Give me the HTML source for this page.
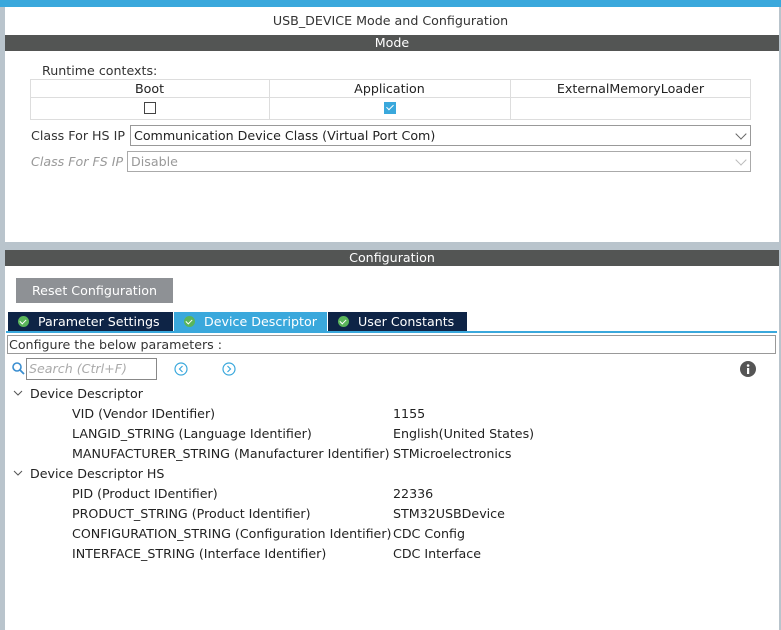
<!DOCTYPE html>
<html><head><meta charset="utf-8"><style>
*{margin:0;padding:0;box-sizing:border-box}
body{width:781px;height:630px;overflow:hidden;background:#fff;font-family:"DejaVu Sans","Liberation Sans",sans-serif;font-size:12.65px;color:#222;position:relative}
.a{position:absolute;white-space:nowrap}
.bar{position:absolute;left:5px;width:774px;height:16px;background:#535554;color:#fff;text-align:center;line-height:16px}
.tab{position:absolute;top:312px;height:19px;background:#0e2446;color:#fff;line-height:19px;padding-left:30px}
.tab i{position:absolute;left:10px;top:4px;width:11px;height:11px;border-radius:50%;background:#5ab55a}
.tab i:after{content:"";position:absolute;left:3px;top:2px;width:3px;height:5px;border:solid #fff;border-width:0 1.5px 1.5px 0;transform:rotate(45deg)}
.sel{position:absolute;height:21px;border:1px solid #999;background:#fff;line-height:19px;padding-left:3px}
.chev{position:absolute;right:5px;top:4px;width:8px;height:8px;border:solid #666;border-width:0 1px 1px 0;transform:rotate(45deg)}
</style></head><body>
<div class="a" style="left:0;top:0;width:781px;height:7px;background:#3aa8dc"></div>
<div class="a" style="left:0;top:7px;width:5px;height:623px;background:#b9c4cc"></div>
<div class="a" style="left:779px;top:7px;width:2px;height:623px;background:#b9c4cc"></div>
<div class="a" style="left:5px;top:242px;width:774px;height:8px;background:#b9c4cc"></div>
<div class="a" style="left:0;top:13px;width:781px;text-align:center;color:#333">USB_DEVICE Mode and Configuration</div>
<div class="bar" style="top:35px">Mode</div>
<div class="a" style="left:42px;top:63px;color:#333">Runtime contexts:</div>
<div class="a" style="left:30px;top:79px;width:721px;height:41px;border:1px solid #ddd"></div>
<div class="a" style="left:30px;top:97px;width:721px;height:1px;background:#ddd"></div>
<div class="a" style="left:269px;top:79px;width:1px;height:41px;background:#ddd"></div>
<div class="a" style="left:510px;top:79px;width:1px;height:41px;background:#ddd"></div>
<div class="a" style="left:30px;top:81px;width:239px;text-align:center">Boot</div>
<div class="a" style="left:269px;top:81px;width:241px;text-align:center">Application</div>
<div class="a" style="left:510px;top:81px;width:241px;text-align:center">ExternalMemoryLoader</div>
<div class="a" style="left:144px;top:102px;width:12px;height:12px;border:1px solid #444"></div>
<div class="a" style="left:384px;top:102px;width:12px;height:12px;background:#3aa8dc"><div style="position:absolute;left:4px;top:1px;width:4px;height:7px;border:solid #fff;border-width:0 1.5px 1.5px 0;transform:rotate(45deg)"></div></div>
<div class="a" style="left:31px;top:128px;color:#333">Class For HS IP</div>
<div class="sel" style="left:130px;top:125px;width:621px">Communication Device Class (Virtual Port Com)<span class="chev"></span></div>
<div class="a" style="left:31px;top:154px;color:#999;font-style:italic">Class For FS IP</div>
<div class="sel" style="left:127px;top:151px;width:624px;color:#999;border-color:#aaa">Disable<span class="chev" style="border-color:#bbb"></span></div>
<div class="bar" style="top:250px">Configuration</div>
<div class="a" style="left:16px;top:278px;width:157px;height:25px;background:#8e9195;color:#fff;text-align:center;line-height:25px">Reset Configuration</div>
<div class="tab" style="left:8px;width:165px"><i></i>Parameter Settings</div>
<div class="tab" style="left:174px;width:153px;background:#3aa8dc"><i></i>Device Descriptor</div>
<div class="tab" style="left:328px;width:139px"><i></i>User Constants</div>
<div class="a" style="left:6px;top:331px;width:771px;height:2px;background:#3aa8dc"></div>
<div class="a" style="left:7px;top:335px;width:769px;height:19px;border:1px solid #999;line-height:17px;padding-left:1px;color:#333">Configure the below parameters :</div>
<svg class="a" style="left:12px;top:362px" width="13" height="13"><circle cx="5" cy="5" r="4" fill="none" stroke="#3a8ed0" stroke-width="1.6"/><line x1="8" y1="8" x2="12" y2="12" stroke="#3a8ed0" stroke-width="1.8"/></svg>
<div class="a" style="left:26px;top:358px;width:131px;height:22px;border:1px solid #888;color:#aaa;font-style:italic;line-height:20px;padding-left:2px">Search (Ctrl+F)</div>
<svg class="a" style="left:174px;top:362px" width="14" height="14"><circle cx="7" cy="7" r="6" fill="none" stroke="#3aa8dc" stroke-width="1.2"/><path d="M8.5 4 L5.5 7 L8.5 10" fill="none" stroke="#3aa8dc" stroke-width="1.2"/></svg>
<svg class="a" style="left:222px;top:362px" width="14" height="14"><circle cx="7" cy="7" r="6" fill="none" stroke="#3aa8dc" stroke-width="1.2"/><path d="M5.5 4 L8.5 7 L5.5 10" fill="none" stroke="#3aa8dc" stroke-width="1.2"/></svg>
<svg class="a" style="left:740px;top:361px" width="16" height="16"><circle cx="8" cy="8" r="8" fill="#555"/><rect x="7" y="7" width="2.2" height="6" fill="#fff"/><circle cx="8.1" cy="4.5" r="1.3" fill="#fff"/></svg>
<svg class="a" style="left:13px;top:389px" width="10" height="8"><path d="M1 2 L5 6 L9 2" fill="none" stroke="#555"/></svg>
<div class="a" style="left:30px;top:386px">Device Descriptor</div>
<div class="a" style="left:72px;top:406px">VID (Vendor IDentifier)</div><div class="a" style="left:393px;top:406px">1155</div>
<div class="a" style="left:72px;top:426px">LANGID_STRING (Language Identifier)</div><div class="a" style="left:393px;top:426px">English(United States)</div>
<div class="a" style="left:72px;top:446px">MANUFACTURER_STRING (Manufacturer Identifier)</div><div class="a" style="left:393px;top:446px">STMicroelectronics</div>
<svg class="a" style="left:13px;top:469px" width="10" height="8"><path d="M1 2 L5 6 L9 2" fill="none" stroke="#555"/></svg>
<div class="a" style="left:30px;top:466px">Device Descriptor HS</div>
<div class="a" style="left:72px;top:486px">PID (Product IDentifier)</div><div class="a" style="left:393px;top:486px">22336</div>
<div class="a" style="left:72px;top:506px">PRODUCT_STRING (Product Identifier)</div><div class="a" style="left:393px;top:506px">STM32USBDevice</div>
<div class="a" style="left:72px;top:526px">CONFIGURATION_STRING (Configuration Identifier)</div><div class="a" style="left:393px;top:526px">CDC Config</div>
<div class="a" style="left:72px;top:546px">INTERFACE_STRING (Interface Identifier)</div><div class="a" style="left:393px;top:546px">CDC Interface</div>
</body></html>
